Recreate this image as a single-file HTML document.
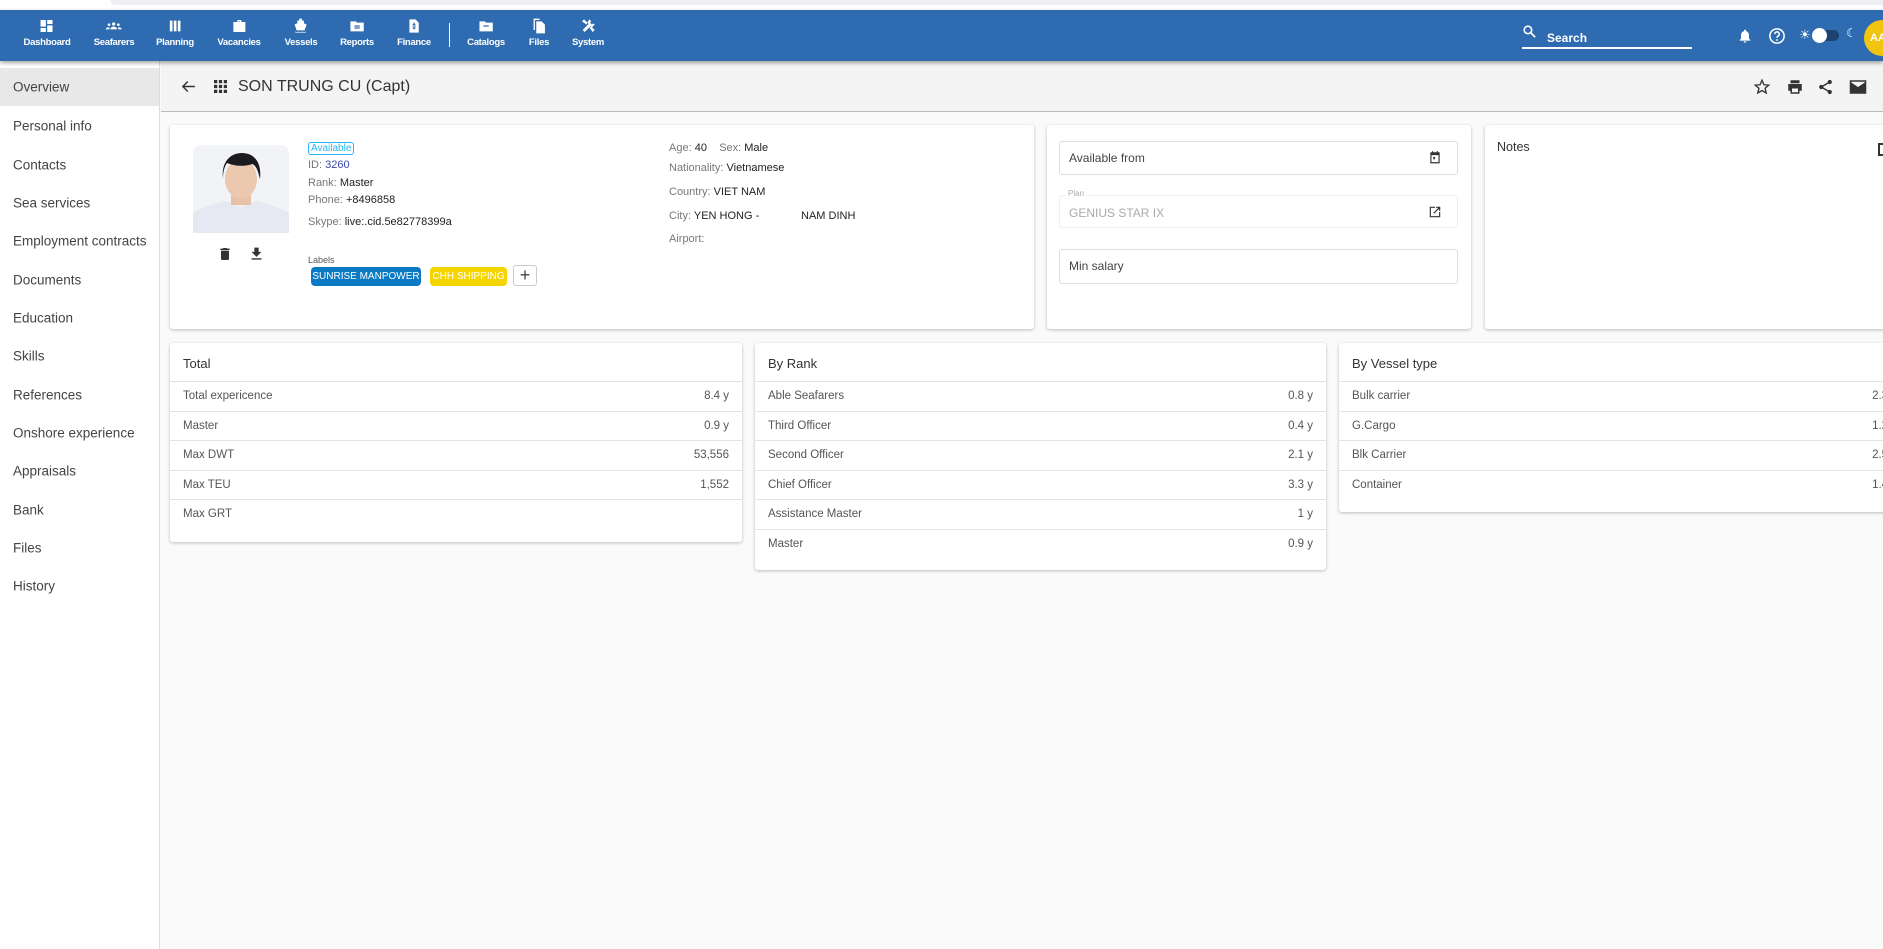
<!DOCTYPE html>
<html><head><meta charset="utf-8">
<style>
*{box-sizing:border-box;margin:0;padding:0}
body{width:1883px;height:949px;overflow:hidden;background:#fafafa;font-family:"Liberation Sans",Arial,sans-serif;color:#333;position:relative}
.a{position:absolute}
.top{left:0;top:0;width:1883px;height:10px;background:#fff}
.top div{position:absolute;left:110px;top:0;width:1800px;height:5px;background:#eef0f3;border-radius:0 0 10px 10px}
.nav{left:0;top:10px;width:1883px;height:51px;background:#2e6bb0;box-shadow:0 2px 4px rgba(0,0,0,.35);z-index:2}
.ni{position:absolute;top:8px;transform:translateX(-50%);text-align:center;color:#fff;font-size:9.5px;font-weight:bold;letter-spacing:-.3px;white-space:nowrap}
.ni svg{display:block;margin:0 auto 3px;width:16px;height:16px}
.side{left:0;top:61px;width:160px;height:888px;background:#fff;border-right:1px solid #ddd}
.si{position:absolute;left:13px;font-size:13.5px;color:#444;transform:translateY(-50%)}
.card{position:absolute;background:#fff;border-radius:3px;box-shadow:0 1px 3px rgba(0,0,0,.25)}
.l{color:#777}
.v{color:#222}
.fld{position:absolute;left:12px;width:399px;border:1px solid #ddd;border-radius:3px;font-size:12px;color:#444;padding-left:9px}
.row{position:absolute;left:0;right:0;height:29.5px;border-top:1px solid #e3e3e3;font-size:11.5px;color:#555;line-height:28px;padding:0 13px}
.row span{float:right}
.hd{position:absolute;left:13px;top:13px;font-size:13px;color:#333}
</style></head><body>
<div class="a top"><div></div></div>
<div class="a nav">
 <div class="ni" style="left:47px"><svg viewBox="0 0 24 24" fill="#fff"><path d="M3 13h8V3H3zm0 8h8v-6H3zm10 0h8V11h-8zm0-18v6h8V3z"/></svg>Dashboard</div>
 <div class="ni" style="left:114px"><svg viewBox="0 0 24 24" fill="#fff"><circle cx="12" cy="9" r="2.5"/><circle cx="5" cy="10" r="2"/><circle cx="19" cy="10" r="2"/><path d="M7 17c0-2.5 2.5-4 5-4s5 1.5 5 4zM0 17c0-2 2-3 4.5-3 1 0 1.5.5 1.5.5L5 17zm24 0c0-2-2-3-4.5-3-1 0-1.5.5-1.5.5l1 2.5z"/></svg>Seafarers</div>
 <div class="ni" style="left:175px"><svg viewBox="0 0 24 24" fill="#fff"><path d="M4 4h4v16H4zm6 0h4v16h-4zm6 0h4v16h-4z"/></svg>Planning</div>
 <div class="ni" style="left:239px"><svg viewBox="0 0 24 24" fill="#fff"><path d="M9 3h6v3h6v15H3V6h6zm2 2v1h2V5z"/></svg>Vacancies</div>
 <div class="ni" style="left:301px"><svg viewBox="0 0 24 24" fill="#fff"><path d="M10 1h4v3h3v4l4 1.5-3 9H6L3 9.5 7 8V4h3zM4 20c2 1.5 4 1.5 5 0 1 1.5 4 1.5 6 0 1 1.5 3 1.5 5 0v2H4z"/></svg>Vessels</div>
 <div class="ni" style="left:357px"><svg viewBox="0 0 24 24" fill="#fff"><path d="M2 5h8l2 2h10v13H2zm6 6v2h8v-2zm0 3v2h8v-2z"/></svg>Reports</div>
 <div class="ni" style="left:414px"><svg viewBox="0 0 24 24" fill="#fff"><path d="M5 2h9l5 5v15H5zm6 5v2h-1v4h3v1h-3v2h1v1h2v-1h1v-4h-3v-1h3V9h-1V7z"/></svg>Finance</div>
 <div class="a" style="left:449px;top:13px;width:1px;height:24px;background:#fff"></div>
 <div class="ni" style="left:486px"><svg viewBox="0 0 24 24" fill="#fff"><path d="M2 5h8l2 2h10v13H2zm6 6v2h8v-2z"/></svg>Catalogs</div>
 <div class="ni" style="left:539px"><svg viewBox="0 0 24 24" fill="#fff"><path d="M4 1h9v2H6v15H4zm4 4h8l5 5v13H8z"/></svg>Files</div>
 <div class="ni" style="left:588px"><svg viewBox="0 0 24 24" fill="#fff"><path d="M14 2l3 3-2 2 3 3 2-2 2 2-4 4-2-2-9 9-3-3 9-9-2-2zM3 5l3-3 5 5-1 3zm11 9l3-1 5 5-3 3z"/></svg>System</div>
 <svg class="a" style="left:1522px;top:14px" width="15" height="15" viewBox="0 0 24 24"><circle cx="9.5" cy="9.5" r="6" fill="none" stroke="#fff" stroke-width="2.6"/><path d="M14 14l7 7" stroke="#fff" stroke-width="2.8"/></svg>
 <div class="a" style="left:1547px;top:21px;font-size:12px;color:#fff;font-weight:bold">Search</div>
 <div class="a" style="left:1522px;top:37px;width:170px;height:1.5px;background:#fff"></div>
 <svg class="a" style="left:1737px;top:17px" width="16" height="18" viewBox="0 0 24 24" fill="#fff"><path d="M12 22a2 2 0 0 0 2-2h-4a2 2 0 0 0 2 2zm6-6V11c0-3-1.6-5.6-4.5-6.3V4a1.5 1.5 0 0 0-3 0v.7C7.6 5.4 6 8 6 11v5l-2 2v1h16v-1z"/></svg>
 <svg class="a" style="left:1768px;top:17px" width="18" height="18" viewBox="0 0 24 24"><circle cx="12" cy="12" r="9.5" fill="none" stroke="#fff" stroke-width="2"/><path d="M9 9.5a3 3 0 1 1 4 2.8c-.8.4-1 1-1 2" fill="none" stroke="#fff" stroke-width="2"/><circle cx="12" cy="17.3" r="1.2" fill="#fff"/></svg>
 <div class="a" style="left:1799px;top:17px;color:#fff;font-size:13px">☀</div>
 <div class="a" style="left:1814px;top:20px;width:25px;height:11px;border-radius:6px;background:#1e4272"></div>
 <div class="a" style="left:1812px;top:18px;width:15px;height:15px;border-radius:50%;background:#fff"></div>
 <div class="a" style="left:1846px;top:16px;color:#fff;font-size:12px">☾</div>
 <div class="a" style="left:1864px;top:10px;width:36px;height:36px;border-radius:50%;background:#f1c40f;color:#fff;font-size:11px;font-weight:bold;line-height:36px;padding-left:6px">AA</div>
</div>

<div class="a side">
 <div class="a" style="left:0;top:7px;width:159px;height:38px;background:#e8e8e8"></div>
 <div class="si" style="top:26px">Overview</div>
 <div class="si" style="top:65px">Personal info</div>
 <div class="si" style="top:103.5px">Contacts</div>
 <div class="si" style="top:141.5px">Sea services</div>
 <div class="si" style="top:180px">Employment contracts</div>
 <div class="si" style="top:218.5px">Documents</div>
 <div class="si" style="top:257px">Education</div>
 <div class="si" style="top:295px">Skills</div>
 <div class="si" style="top:333.5px">References</div>
 <div class="si" style="top:372px">Onshore experience</div>
 <div class="si" style="top:410px">Appraisals</div>
 <div class="si" style="top:448.5px">Bank</div>
 <div class="si" style="top:487px">Files</div>
 <div class="si" style="top:525px">History</div>
</div>

<div class="a" style="left:161px;top:61px;width:1722px;height:51px;background:#f4f4f4;border-bottom:1.5px solid #bbb"></div>
<svg class="a" style="left:180px;top:78px" width="17" height="17" viewBox="0 0 24 24"><path d="M21 12H4m7-7l-7 7 7 7" fill="none" stroke="#333" stroke-width="2"/></svg>
<svg class="a" style="left:214px;top:80px" width="13" height="13" viewBox="0 0 12 12" fill="#333"><rect x="0" y="0" width="3" height="3"/><rect x="4.5" y="0" width="3" height="3"/><rect x="9" y="0" width="3" height="3"/><rect x="0" y="4.5" width="3" height="3"/><rect x="4.5" y="4.5" width="3" height="3"/><rect x="9" y="4.5" width="3" height="3"/><rect x="0" y="9" width="3" height="3"/><rect x="4.5" y="9" width="3" height="3"/><rect x="9" y="9" width="3" height="3"/></svg>
<div class="a" style="left:238px;top:78px;font-size:16px;color:#333">SON TRUNG CU (Capt)</div>
<svg class="a" style="left:1753px;top:78px" width="18" height="18" viewBox="0 0 24 24"><path d="M12 3l2.6 6 6.4.5-4.9 4.2 1.5 6.3L12 16.7 6.4 20l1.5-6.3L3 9.5 9.4 9z" fill="none" stroke="#333" stroke-width="1.8"/></svg>
<svg class="a" style="left:1786px;top:78px" width="18" height="18" viewBox="0 0 24 24" fill="#333"><path d="M6 3h12v4H6zM3 8h18v9h-3v4H6v-4H3zm5 6v5h8v-5z"/></svg>
<svg class="a" style="left:1817px;top:78px" width="17" height="18" viewBox="0 0 24 24" fill="#333"><circle cx="18" cy="5" r="3"/><circle cx="6" cy="12" r="3"/><circle cx="18" cy="19" r="3"/><path d="M6 12l12-7M6 12l12 7" stroke="#333" stroke-width="2"/></svg>
<svg class="a" style="left:1849px;top:79px" width="18" height="16" viewBox="0 0 24 20" fill="#333"><path d="M1 1h22v18H1zm2 2v1l9 6 9-6V3z"/></svg>

<!-- card1 -->
<div class="card" style="left:170px;top:125px;width:864px;height:204px">
 <svg class="a" style="left:23px;top:20px" width="96" height="88" viewBox="0 0 96 88"><rect width="96" height="88" rx="8" fill="#f1f3f7"/><path d="M0 88V68c10-6 24-10 32-12l16 6 16-6c8 2 22 6 32 12v20z" fill="#e6e9f1"/><rect x="38" y="42" width="20" height="18" fill="#e6c2a8"/><ellipse cx="48" cy="34" rx="16" ry="20" fill="#ecc9ae"/><path d="M30 34c-2-18 8-26 19-26s20 8 18 26c-2-8-4-14-8-15-8 3-18 2-25-1-3 4-4 10-4 16z" fill="#1b1b1f"/></svg>
 <svg class="a" style="left:47px;top:120px" width="16" height="18" viewBox="0 0 24 24" fill="#333"><path d="M6 19a2 2 0 0 0 2 2h8a2 2 0 0 0 2-2V7H6zM19 4h-3.5l-1-1h-5l-1 1H5v2h14z"/></svg>
 <svg class="a" style="left:78px;top:120px" width="17" height="18" viewBox="0 0 24 24" fill="#333"><path d="M19 9h-4V3H9v6H5l7 7zM5 18v2h14v-2z"/></svg>
 <div class="a" style="left:138px;top:17px;border:1px solid #29b6f6;border-radius:3px;font-size:10px;color:#29b6f6;padding:0 2px;line-height:11px">Available</div>
 <div class="a" style="left:138px;top:32px;font-size:11px;line-height:17.5px"><span class="l">ID:</span> <span style="color:#3949ab">3260</span><br><span class="l">Rank:</span> <span class="v">Master</span><br><span class="l">Phone:</span> <span class="v">+8496858</span></div>
 <div class="a" style="left:138px;top:91px;font-size:11px"><span class="l">Skype:</span> <span class="v">live:.cid.5e82778399a</span></div>
 <div class="a" style="left:138px;top:130px;font-size:9px;color:#555">Labels</div>
 <div class="a" style="left:141px;top:142px;width:110px;height:19px;border-radius:4px;background:#0b7ac4;color:#fff;font-size:10px;line-height:19px;text-align:center">SUNRISE MANPOWER</div>
 <div class="a" style="left:260px;top:142px;width:77px;height:19px;border-radius:4px;background:#f4d500;color:#fff;font-size:10px;line-height:19px;text-align:center;white-space:nowrap">CHH SHIPPING</div>
 <div class="a" style="left:343px;top:140px;width:24px;height:21px;border:1px solid #ccc;border-radius:3px;font-size:18px;line-height:18px;text-align:center;color:#444;background:#fff">+</div>
 <div class="a" style="left:499px;top:13px;font-size:11px;line-height:20px;white-space:nowrap">
  <div><span class="l">Age:</span> <span class="v">40</span>&nbsp;&nbsp;&nbsp;&nbsp;<span class="l">Sex:</span> <span class="v">Male</span></div>
  <div><span class="l">Nationality:</span> <span class="v">Vietnamese</span></div>
  <div style="margin-top:4px"><span class="l">Country:</span> <span class="v">VIET NAM</span></div>
  <div style="margin-top:4px;position:relative"><span class="l">City:</span> <span class="v">YEN HONG -</span><span class="v" style="position:absolute;left:132px">NAM DINH</span></div>
  <div style="margin-top:3px"><span class="l">Airport:</span></div>
 </div>
</div>

<!-- card2 -->
<div class="card" style="left:1047px;top:125px;width:424px;height:204px">
 <div class="fld" style="top:16px;height:34px;line-height:32px">Available from</div>
 <svg class="a" style="left:381px;top:25px" width="14" height="15" viewBox="0 0 24 24" fill="#333"><path d="M7 1h2v2h6V1h2v2h3v19H4V3h3zM6 8v12h12V8zm3 3h3v4H9z"/></svg>
 <div class="fld" style="top:70px;height:33px;line-height:34px;color:#aaa;border-color:#eee">GENIUS STAR IX</div>
 <div class="a" style="left:19px;top:64px;font-size:8px;color:#aaa;background:#fff;padding:0 2px">Plan</div>
 <svg class="a" style="left:381px;top:80px" width="14" height="14" viewBox="0 0 24 24" fill="#333"><path d="M3 3h9v2H5v14h14v-7h2v9H3zm11 0h7v7h-2V6.4l-8.3 8.3-1.4-1.4L17.6 5H14z"/></svg>
 <div class="fld" style="top:124px;height:35px;line-height:33px">Min salary</div>
</div>

<!-- card3 -->
<div class="card" style="left:1485px;top:125px;width:420px;height:204px">
 <div class="a" style="left:12px;top:15px;font-size:12.5px;color:#333">Notes</div>
 <div class="a" style="left:393px;top:18px;width:8px;height:13px;border:2px solid #333;border-right:none"></div>
</div>

<!-- stats -->
<div class="card" style="left:170px;top:343px;width:572px;height:199px">
 <div class="hd">Total</div>
 <div class="row" style="top:38px">Total expericence<span>8.4 y</span></div>
 <div class="row" style="top:67.5px">Master<span>0.9 y</span></div>
 <div class="row" style="top:97px">Max DWT<span>53,556</span></div>
 <div class="row" style="top:126.5px">Max TEU<span>1,552</span></div>
 <div class="row" style="top:156px">Max GRT<span></span></div>
</div>
<div class="card" style="left:755px;top:343px;width:571px;height:227px">
 <div class="hd">By Rank</div>
 <div class="row" style="top:38px">Able Seafarers<span>0.8 y</span></div>
 <div class="row" style="top:67.5px">Third Officer<span>0.4 y</span></div>
 <div class="row" style="top:97px">Second Officer<span>2.1 y</span></div>
 <div class="row" style="top:126.5px">Chief Officer<span>3.3 y</span></div>
 <div class="row" style="top:156px">Assistance Master<span>1 y</span></div>
 <div class="row" style="top:185.5px">Master<span>0.9 y</span></div>
</div>
<div class="card" style="left:1339px;top:343px;width:571px;height:169px">
 <div class="hd">By Vessel type</div>
 <div class="row" style="top:38px">Bulk carrier<span>2.3 y</span></div>
 <div class="row" style="top:67.5px">G.Cargo<span>1.2 y</span></div>
 <div class="row" style="top:97px">Blk Carrier<span>2.5 y</span></div>
 <div class="row" style="top:126.5px">Container<span>1.4 y</span></div>
</div>
</body></html>
